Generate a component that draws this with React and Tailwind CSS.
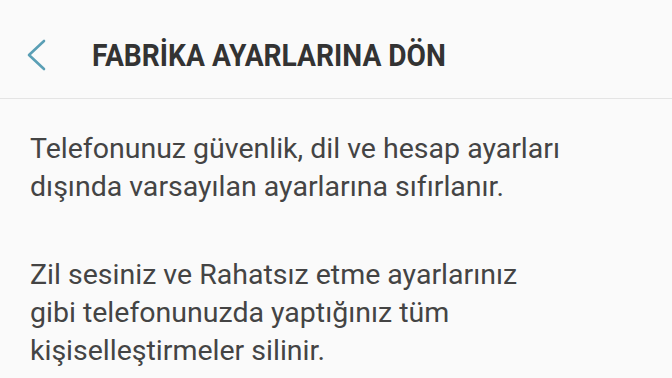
export default function App() {
  return (
    <div className="h-[378px] w-[672px] overflow-hidden bg-[#fafafa]" style={{ fontFamily: "Roboto, 'Noto Sans', sans-serif" }}>
      <header className="flex h-[99px] items-center border-b border-[#e4e4e4] pt-[11px]">
        <div className="flex w-[92px] items-center pl-[25px]">
          <svg width="22" height="32" viewBox="0 0 22 32" fill="none">
            <path d="M19 2 L4 16 L19 30" stroke="#5a9fb5" strokeWidth="2.6" strokeLinecap="round" strokeLinejoin="round" />
          </svg>
        </div>
        <h1 className="origin-left scale-x-[0.88] whitespace-nowrap text-[32px] font-bold text-[#333333]">
          FABRİKA AYARLARINA DÖN
        </h1>
      </header>
      <main className="px-[30px] pt-[31px] text-[28.5px] leading-[38px] text-[#444444]">
        <p>
          Telefonunuz güvenlik, dil ve hesap ayarları
          <br />
          dışında varsayılan ayarlarına sıfırlanır.
        </p>
        <p className="mt-[50px]">
          Zil sesiniz ve Rahatsız etme ayarlarınız
          <br />
          gibi telefonunuzda yaptığınız tüm
          <br />
          kişiselleştirmeler silinir.
        </p>
      </main>
    </div>
  );
}
